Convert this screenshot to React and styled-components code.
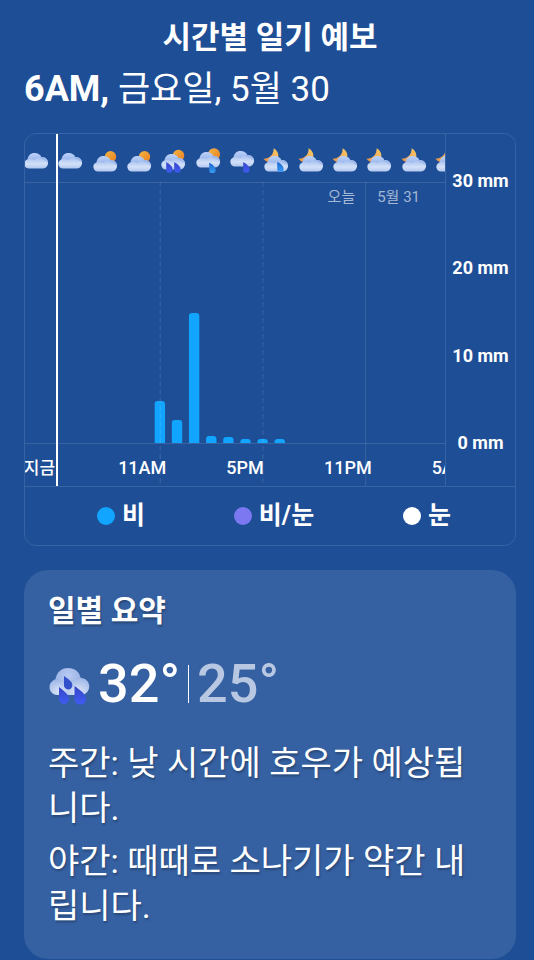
import React from 'react';
import styled, { createGlobalStyle } from 'styled-components';

const GlobalStyle = createGlobalStyle`
  * {
    box-sizing: border-box;
  }

  body {
    margin: 0;
    background: #1e4e96;
    color: #fff;
    font-family: Roboto, "Noto Sans CJK KR", sans-serif;
  }

  h1, h2, p {
    margin: 0;
  }
`;

const hours = [
  'cloud', 'cloud', 'sunCloud', 'sunCloud', 'sunHeavy', 'sunRain', 'rain',
  'moonRain', 'moon', 'moon', 'moon', 'moon', 'moon',
];

const bars = [42, 23, 130, 7, 6, 4, 4, 4];

const CLOUD_TOP = {
  cloud: 5,
  sunCloud: 8,
  sunHeavy: 6,
  sunRain: 4,
  rain: 3,
  moonRain: 8,
  moon: 8,
};

const Defs = () => (
  <HiddenSvg aria-hidden="true">
    <defs>
      <linearGradient id="hump" x1="0" y1="0" x2="0" y2="1">
        <stop offset="0" stopColor="#bcd2fa" />
        <stop offset="1" stopColor="#8eace6" />
      </linearGradient>
      <linearGradient id="base" x1="0" y1="0" x2="0" y2="1">
        <stop offset="0" stopColor="#a3bdee" />
        <stop offset="0.6" stopColor="#d3e1f9" />
        <stop offset="1" stopColor="#b0c6ee" />
      </linearGradient>
      <linearGradient id="sun" x1="0" y1="0" x2="1" y2="1">
        <stop offset="0" stopColor="#f3b544" />
        <stop offset="1" stopColor="#e87e22" />
      </linearGradient>
      <linearGradient id="moonFill" x1="1" y1="0" x2="0" y2="1">
        <stop offset="0" stopColor="#f9cd6a" />
        <stop offset="1" stopColor="#eb8f45" />
      </linearGradient>
      <linearGradient id="dropBlue" x1="0" y1="0" x2="0" y2="1">
        <stop offset="0" stopColor="#1765cc" />
        <stop offset="1" stopColor="#3b9cf5" />
      </linearGradient>
      <linearGradient id="dropViolet" x1="0" y1="0" x2="0" y2="1">
        <stop offset="0" stopColor="#3746c8" />
        <stop offset="1" stopColor="#3f5cf2" />
      </linearGradient>
      <radialGradient id="puff" cx="0.5" cy="0.3" r="0.7">
        <stop offset="0" stopColor="#b9cbf3" />
        <stop offset="1" stopColor="#90aae0" />
      </radialGradient>
      <radialGradient id="side" cx="0.5" cy="0.8" r="0.8">
        <stop offset="0" stopColor="#dce6f9" />
        <stop offset="1" stopColor="#9db5e6" />
      </radialGradient>
    </defs>
  </HiddenSvg>
);

const Drop = ({ x, y, fill }) => (
  <path
    transform={`translate(${x} ${y})`}
    d="M.2 0C2.6 1.6 6.6 3.8 6.6 7.4A3.2 3.2 0 0 1 .2 7.4Z"
    fill={`url(#${fill})`}
  />
);

const HourIcon = ({ kind }) => (
  <svg width="26" height="26" viewBox="0 0 26 26" aria-hidden="true">
    {kind === 'sunCloud' && <circle cx="18.5" cy="8.8" r="5.7" fill="url(#sun)" />}
    {kind === 'sunHeavy' && <circle cx="18.5" cy="7.5" r="5.8" fill="url(#sun)" />}
    {kind === 'sunRain' && <circle cx="19" cy="6.3" r="6" fill="url(#sun)" />}
    {kind.startsWith('moon') && (
      <path
        d="M10.6 .2C17 3.4 17.4 13.4 9.4 14.2 5.6 14.8 1.8 13.4 .4 10.6 5 11 11 7.6 10.6 .2Z"
        fill="url(#moonFill)"
      />
    )}
    <g transform={`translate(1 ${CLOUD_TOP[kind]})`}>
      <path d="M3.4 8C3.4 2.6 6.6 0 10.6 0 14 0 16.4 1.6 17.6 4.6L17 10H4Z" fill="url(#hump)" />
      <path
        d="M4.9 15.6A4.7 4.7 0 0 1 3.2 6.6C5.6 5.6 8.4 6.2 10.6 7 12.2 5 14.8 4 17.6 4A5.8 5.8 0 0 1 19 15.6Z"
        fill="url(#base)"
      />
      <path d="M17.4 4A5.7 5.7 0 0 1 23.9 10C22.4 8 19.4 7.4 15.4 4.5Z" fill="#8eabe4" opacity="0.45" />
    </g>
    {kind === 'sunHeavy' && (
      <>
        <Drop x="6" y="14" fill="dropViolet" />
        <Drop x="14" y="14" fill="dropViolet" />
      </>
    )}
    {kind === 'sunRain' && <Drop x="14" y="14.5" fill="dropBlue" />}
    {kind === 'rain' && <Drop x="14" y="14" fill="dropViolet" />}
    {kind === 'moonRain' && <Drop x="14" y="13.5" fill="dropBlue" />}
  </svg>
);

const HeavyRainIcon = () => (
  <HeavySvg width="42" height="38" viewBox="0 0 42 38" aria-hidden="true">
    <path d="M7 16C7 6 12 0 20 0S33 5 33 14L30 25H10Z" fill="url(#puff)" />
    <path d="M8 27A8 8 0 1 1 11 11.2C16 12.4 18 16 19 20L22 27Z" fill="url(#side)" />
    <path d="M34 27A8.4 8.4 0 1 0 31 9.8C25 11 22 15 20.5 20L18 27Z" fill="url(#side)" />
    <path d="M16 8C19.6 10.6 24.4 13.4 24.4 17.2A4.2 4.2 0 0 1 16 17.4Z" fill="#3350cb" />
    <path d="M11 19C15 22.4 21 26 21 31A5 5 0 0 1 11 31Z" fill="url(#dropViolet)" />
    <path d="M26.5 18C31 21.4 38.2 25.6 38.2 31.4A5.9 5.9 0 0 1 26.5 31.4Z" fill="url(#dropViolet)" />
  </HeavySvg>
);

// 1 unit = 1px on a 534px wide phone, stretched with the card otherwise
const RainPlot = () => (
  <PlotSvg viewBox="0 0 421 304" preserveAspectRatio="none" role="img" aria-label="비">
    <path d="M0 .5H421M0 261.5H421" stroke="#fff" strokeOpacity="0.12" />
    <path d="M341.5 0V304" stroke="#fff" strokeOpacity="0.12" />
    {bars.map((h, i) => {
      const x = 130 + (i * 103) / 6;
      const r = Math.min(h, 3);
      return (
        <path
          key={i}
          d={`M${x} 261V${261 - h + r}q0 ${-r} 3 ${-r}h4.4q3 0 3 ${r}V261Z`}
          fill="#12a5ff"
        />
      );
    })}
    <path
      d="M135.5 0V304M238.5 0V304"
      stroke="#fff"
      strokeOpacity="0.14"
      strokeDasharray="5 3"
    />
  </PlotSvg>
);

const App = () => {
  return (
    <Page>
      <GlobalStyle />
      <Defs />
      <Title>시간별 일기 예보</Title>
      <DateLine>
        <strong>6AM,</strong> 금요일, 5월 30
      </DateLine>

      <ChartCard>
        <ChartBody>
          <Timeline>
            <RainPlot />
            <IconRow>
              {hours.map((kind, i) => (
                <HourIcon key={i} kind={kind} />
              ))}
            </IconRow>
            <DayRow>
              <Today>오늘</Today>
              <Tomorrow>5월 31</Tomorrow>
            </DayRow>
            <HourRow>
              <Now>지금</Now>
              <span>11AM</span>
              <span>5PM</span>
              <span>11PM</span>
              <span>5AM</span>
            </HourRow>
            <NowLine />
          </Timeline>
          <Scale>
            <span>30 mm</span>
            <span>20 mm</span>
            <span>10 mm</span>
            <span>0 mm</span>
          </Scale>
        </ChartBody>
        <Legend>
          <LegendItem $color="#12a5ff">비</LegendItem>
          <LegendItem $color="#7b78f2">비/눈</LegendItem>
          <LegendItem $color="#fff">눈</LegendItem>
        </Legend>
      </ChartCard>

      <SummaryCard>
        <SummaryTitle>일별 요약</SummaryTitle>
        <Temps>
          <HeavyRainIcon />
          <High>32°</High>
          <Divider />
          <Low>25°</Low>
        </Temps>
        <Summary>주간: 낮 시간에 호우가 예상됩니다.</Summary>
        <Summary>야간: 때때로 소나기가 약간 내립니다.</Summary>
      </SummaryCard>
    </Page>
  );
};

const Page = styled.main`
  padding: 16px 18px 2px 24px;
`;

const HiddenSvg = styled.svg`
  display: block;
  width: 0;
  height: 0;
`;

const Title = styled.h1`
  font-size: 31px;
  font-weight: 700;
  line-height: 44px;
  text-align: center;
`;

const DateLine = styled.p`
  margin-top: 4px;
  font-size: 35px;
  font-weight: 400;
  line-height: 50px;

  strong {
    font-size: 36px;
    font-weight: 700;
  }
`;

const ChartCard = styled.section`
  margin-top: 18px;
  border: 1px solid #3762a3;
  border-radius: 12px;
  overflow: hidden;
`;

const ChartBody = styled.div`
  display: grid;
  grid-template-columns: minmax(0, 1fr) 70px;
  border-bottom: 1px solid #3762a3;
`;

const Timeline = styled.div`
  display: grid;
  grid-template-columns: minmax(0, 1fr);
  grid-template-rows: 48px 261px 43px;
  overflow: hidden;
`;

const PlotSvg = styled.svg`
  grid-area: 2 / 1 / 4 / 2;
  display: block;
  width: 100%;
  height: 304px;
`;

const IconRow = styled.div`
  grid-area: 1 / 1 / 2 / 2;
  display: grid;
  grid-template-columns: repeat(13, 1fr);
  justify-items: center;
  margin: 0 -20px 0 -6px;
  padding-top: 14px;
`;

const DayRow = styled.div`
  grid-area: 2 / 1 / 3 / 2;
  display: grid;
  grid-template-columns: 81% 19%;
  font-size: 15px;
  line-height: 30px;
  color: #a5b8d5;
`;

const Today = styled.span`
  padding-right: 10px;
  text-align: right;
`;

const Tomorrow = styled.span`
  padding-left: 12px;
`;

const HourRow = styled.div`
  grid-area: 3 / 1 / 4 / 2;
  display: grid;
  grid-template-columns: repeat(5, 1fr);
  margin: 0 -57px 0 -37px;
  font-size: 18px;
  font-weight: 500;
  line-height: 50px;
  text-align: center;
`;

const Now = styled.span`
  font-size: 17px;
`;

const NowLine = styled.div`
  grid-area: 1 / 1 / 4 / 2;
  width: 2px;
  margin-left: 31px;
  background: #fff;
`;

const Scale = styled.div`
  display: flex;
  flex-direction: column;
  justify-content: space-between;
  padding: 35px 0 31px;
  border-left: 1px solid #3762a3;
  font-size: 18px;
  font-weight: 700;
  line-height: 24px;
  text-align: center;
`;

const Legend = styled.div`
  display: flex;
  justify-content: space-between;
  padding: 10px 64px 10px 72px;
`;

const LegendItem = styled.span`
  display: flex;
  align-items: center;
  gap: 7px;
  font-size: 25px;
  font-weight: 700;
  line-height: 38px;

  &::before {
    content: '';
    width: 18px;
    height: 18px;
    border-radius: 50%;
    background: ${({ $color }) => $color};
  }
`;

const SummaryCard = styled.section`
  margin-top: 24px;
  padding: 24px 24px 30px;
  border-radius: 24px;
  background: #3560a1;
  text-shadow: 1px 2px 2px rgba(0, 0, 0, 0.25);
`;

const SummaryTitle = styled.h2`
  font-size: 30px;
  font-weight: 700;
  line-height: 34px;
`;

const Temps = styled.div`
  display: flex;
  align-items: center;
  gap: 8px;
  margin: 22px 0 23px;
  font-size: 54px;
  font-weight: 500;
  line-height: 68px;
  text-shadow: none;
`;

const HeavySvg = styled.svg`
  flex-shrink: 0;
  align-self: flex-end;
  margin-bottom: 12px;
`;

const High = styled.span`
  color: #fff;
`;

const Low = styled.span`
  color: #b9c8e2;
`;

const Divider = styled.div`
  width: 1px;
  height: 38px;
  background: #fff;
`;

const Summary = styled.p`
  font-size: 34px;
  line-height: 45px;

  & + & {
    margin-top: 8px;
  }
`;

export default App;
